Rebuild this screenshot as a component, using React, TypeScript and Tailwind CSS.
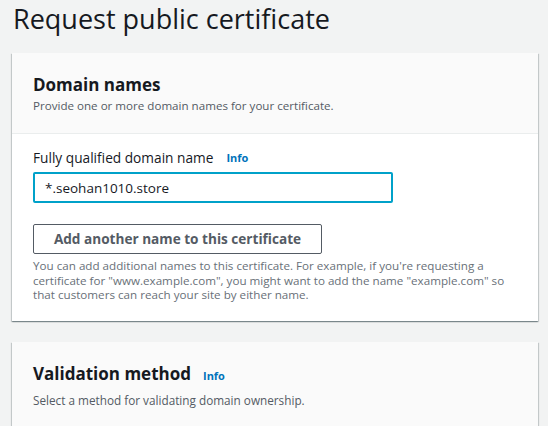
import React, { useState } from 'react';

const cardShadow =
  'shadow-[0_1px_1px_0_rgba(0,28,36,0.3),1px_1px_1px_0_rgba(0,28,36,0.15),-1px_1px_1px_0_rgba(0,28,36,0.15)]';

const InfoLink: React.FC = () => (
  <a href="#" className="text-[11px] font-bold text-[#0073bb] no-underline">
    Info
  </a>
);

const App: React.FC = () => {
  const [domain, setDomain] = useState<string>('*.seohan1010.store');

  return (
    <div
      className="h-[426px] overflow-hidden bg-[#f2f3f3] pl-[12px] pr-[10px] text-[#16191f]"
      style={{ fontFamily: '"Open Sans", "Noto Sans", Arial, sans-serif' }}
    >
      <h1 className="pl-[1px] pt-[1px] text-[27px] font-normal leading-[36px] text-[#16191f]">
        Request public certificate
      </h1>

      {/* Domain names */}
      <div className={`mt-[16px] bg-white ${cardShadow}`}>
        <div className="border-b border-[#eaeded] bg-[#fafafa] px-[21px] pb-[19px] pt-[18px]">
          <h2 className="text-[17px] font-bold leading-[27px]">Domain names</h2>
          <p className="text-[11.6px] leading-[16px] text-[#545b64]">
            Provide one or more domain names for your certificate.
          </p>
        </div>
        <div className="px-[21px] pb-[18px] pt-[15px]">
          <div className="flex items-center gap-[13px]">
            <label className="text-[13.7px] leading-[18px]">Fully qualified domain name</label>
            <InfoLink />
          </div>
          <input
            value={domain}
            onChange={(e) => setDomain(e.target.value)}
            className="mt-[5px] block h-[31px] w-[360px] rounded-[2px] border-2 border-[#00a1c9] bg-white px-[10px] text-[13.5px] text-[#16191f] outline-none"
          />
          <button className="mt-[21px] block h-[30px] w-[289px] rounded-[2px] border border-[#545b64] bg-white text-[13.6px] font-bold text-[#545b64]">
            Add another name to this certificate
          </button>
          <p className="mt-[5px] text-[11.65px] leading-[14.5px] text-[#687078]">
            You can add additional names to this certificate. For example, if you're requesting a
            certificate for "www.example.com", you might want to add the name "example.com" so
            that customers can reach your site by either name.
          </p>
        </div>
      </div>

      {/* Validation method */}
      <div className={`mt-[21px] bg-[#fafafa] ${cardShadow}`}>
        <div className="px-[21px] pb-[40px] pt-[18px]">
          <div className="flex items-baseline gap-[12px]">
            <h2 className="text-[17px] font-bold leading-[27px]">Validation method</h2>
            <InfoLink />
          </div>
          <p className="mt-[5px] text-[11.75px] leading-[16px] text-[#545b64]">
            Select a method for validating domain ownership.
          </p>
        </div>
      </div>
    </div>
  );
};

export default App;
